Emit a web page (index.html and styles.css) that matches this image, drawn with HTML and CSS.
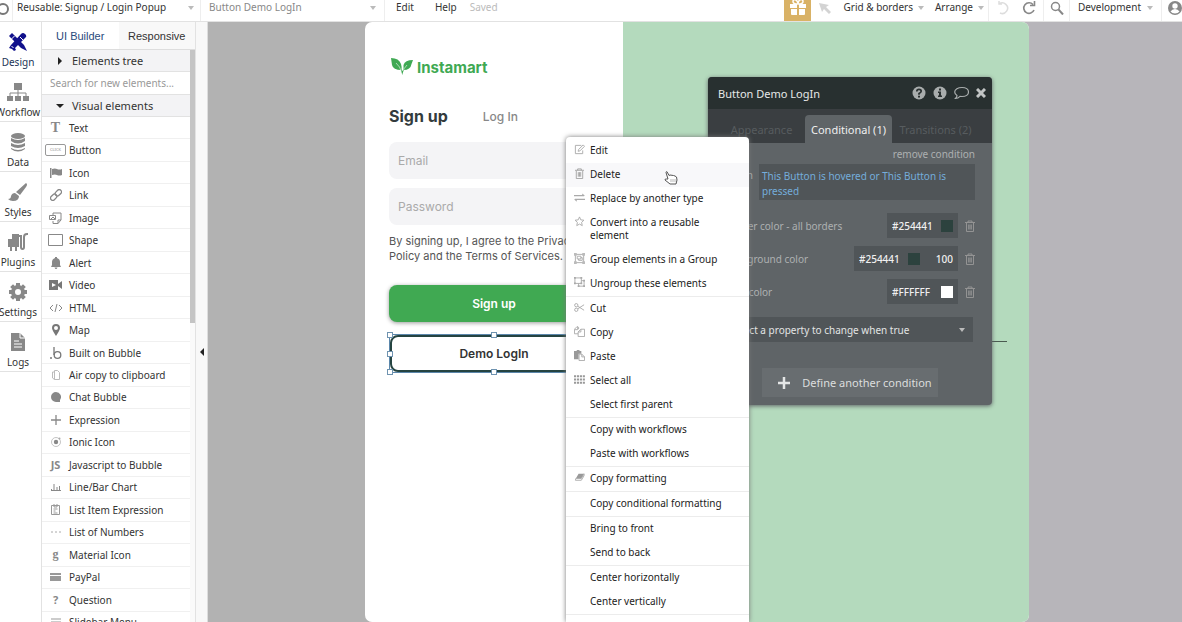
FILE: index.html
```html
<!DOCTYPE html>
<html lang="en">
<head>
    <meta charset="UTF-8">
    <meta name="viewport" content="width=device-width, initial-scale=1.0">
    <title>Signup / Login Popup - Editor</title>
    <link rel="stylesheet" href="styles.css">
</head>
<body>
    <header class="topbar">
        <div class="logo-cell">
            <svg width="12" height="14" viewBox="0 0 12 14"><circle cx="3" cy="8" r="5" fill="none" stroke="#777" stroke-width="2"/></svg>
        </div>
        <div class="picker page-picker">
            <select aria-label="Page"><option>Reusable: Signup / Login Popup</option></select>
            <span class="caret"></span>
        </div>
        <div class="picker element-picker">
            <select aria-label="Element"><option>Button Demo LogIn</option></select>
            <span class="caret"></span>
        </div>
        <nav class="main-menu">
            <button>Edit</button>
            <button>Help</button>
            <span class="saved">Saved</span>
        </nav>
        <button class="gift" aria-label="Gift">
            <svg width="18" height="16" viewBox="0 0 18 16" fill="#fff"><path d="M1 4h7v4H1zM10 4h7v4h-7zM2 9h6v6H3q-1 0-1-1zM10 9h6v5q0 1-1 1h-5z"/><path d="M8.500 4Q4 4 4 1.500 4-.5 6-.5 8 0 9 3 10-.5 12-.5t2 2Q14 4 9.500 4" fill="none" stroke="#fff" stroke-width="1.500"/></svg>
        </button>
        <button class="pointer" aria-label="Pointer">
            <svg width="12" height="12" viewBox="0 0 12 12"><path d="M0 1l10 2-3 2 5 5-2 2-5-5-2 3z" fill="#d3d3d3"/></svg>
        </button>
        <div class="drops">
            <button class="drop">Grid &amp; borders <span class="caret"></span></button>
            <button class="drop">Arrange <span class="caret"></span></button>
        </div>
        <div class="history">
            <button aria-label="Undo"><svg width="14" height="14" viewBox="0 0 14 14"><path d="M3 3A5.300 5.300 0 1 1 4 12M3 0v3h3" fill="none" stroke="#ddd" stroke-width="1.500"/></svg></button>
            <button aria-label="Redo"><svg width="14" height="14" viewBox="0 0 14 14"><path d="M11 3.500A5.300 5.300 0 1 0 12 9M12.500 0v4.500H8" fill="none" stroke="#888" stroke-width="1.600"/></svg></button>
        </div>
        <button class="search-btn" aria-label="Search">
            <svg width="14" height="14" viewBox="0 0 14 14" fill="none" stroke="#888"><circle cx="5.500" cy="5.500" r="4" stroke-width="1.500"/><path d="M8.500 8.500l4.500 5" stroke-width="2"/></svg>
        </button>
        <div class="picker version-picker">
            <select aria-label="Version"><option>Development</option></select>
            <span class="caret"></span>
        </div>
        <button class="account" aria-label="Account">
            <svg width="14" height="14" viewBox="0 0 14 14"><circle cx="7" cy="7" r="7" fill="#888"/><circle cx="7" cy="5" r="2.700" fill="#fff"/><path d="M2.500 10.500Q4 8 7 8t4.500 2.500Q10 12.500 7 12.500T2.500 10.500" fill="#fff"/></svg>
        </button>
    </header>

    <main class="workspace">
        <nav class="rail">
            <a href="#design" class="rail-item active">
                <svg width="20" height="20" viewBox="0 0 20 20" fill="#11118c"><path d="M1 4l3-3 12 12 3 6-6-3z"/><path d="M13 2q2-2 4 0l1 1q1 2-1 3L7 16l1 2-2 1-2-2-3-1 2-3z"/><path d="M3.500 7l3-3M5.500 16l-2-2M12 5l3 3" stroke="#fff"/></svg>
                Design
            </a>
            <a href="#workflow" class="rail-item">
                <svg width="24" height="20" viewBox="0 0 24 20" fill="#888"><path d="M8 1h8v7H8zM1 14h6v5H1zM9 14h6v5H9zM17 14h6v5h-6z"/><path d="M12 8v6M4 14v-3h16v3" fill="none" stroke="#888"/></svg>
                Workflow
            </a>
            <a href="#data" class="rail-item">
                <svg width="18" height="20" viewBox="0 0 18 20" fill="#888"><ellipse cx="9" cy="4" rx="7" ry="3"/><path d="M2 6q7 4 14 0v3q-7 5-14 0zM2 11q7 4 14 0v3q-7 4-14 0zM2 16q7 4 14 0v1q-7 5-14 0z"/></svg>
                Data
            </a>
            <a href="#styles" class="rail-item">
                <svg width="20" height="20" viewBox="0 0 20 20" fill="#888"><path d="M18 1q2 1 0 4l-6 8-4-3zM7 11l4 3q0 5-6 5-3 0-5-2 3 0 3-3 1-3 4-3"/></svg>
                Styles
            </a>
            <a href="#plugins" class="rail-item">
                <svg width="22" height="20" viewBox="0 0 22 20"><path d="M5 2h7v13h-2v4H8v-4H5v4H3v-4H1V7h4z" fill="#888"/><path d="M12 4h2v11q0 2 1.500 2t1.500-2V5q0-3 3-3h1" fill="none" stroke="#888" stroke-width="2"/></svg>
                Plugins
            </a>
            <a href="#settings" class="rail-item">
                <svg width="20" height="20" viewBox="0 0 20 20"><circle cx="10" cy="10" r="5" fill="none" stroke="#888" stroke-width="4"/><path d="M10 1v3M10 16v3M1 10h3M16 10h3M3.600 3.600l2 2M14.400 14.400l2 2M16.400 3.600l-2 2M5.600 14.400l-2 2" stroke="#888" stroke-width="4"/></svg>
                Settings
            </a>
            <a href="#logs" class="rail-item">
                <svg width="16" height="20" viewBox="0 0 16 20"><path d="M1 1h9l5 5v13H1z" fill="#888"/><path d="M10 1v5h5M4 9h5M4 12h8M4 15h8" fill="none" stroke="#fff"/></svg>
                Logs
            </a>
        </nav>

        <aside class="palette">
            <div class="palette-tabs">
                <button class="selected">UI Builder</button>
                <button>Responsive</button>
            </div>
            <div class="palette-body">
                <div class="palette-scroll">
                    <button class="section"><span class="tri-right"></span>Elements tree</button>
                    <input class="palette-search" type="text" aria-label="Search for new elements" placeholder="Search for new elements...">
                    <button class="section"><span class="tri-down"></span>Visual elements</button>
                    <ul class="elements">
                        <li><span class="glyph serif">T</span>Text</li>
                        <li><span class="glyph"><span class="click">CLICK</span></span>Button</li>
                        <li><span class="glyph"><svg width="12" height="12" viewBox="0 0 12 12"><path d="M0 1h1.500v10H0zM2 2q3-1 5 0t5 0v6q-3 1-5 0T2 8z" fill="#888"/></svg></span>Icon</li>
                        <li><span class="glyph"><svg width="12" height="12" viewBox="0 0 12 12" fill="none" stroke="#888" stroke-width="1.300"><rect x="5" y="1.500" width="7" height="4.500" rx="2.200" transform="rotate(-45 8.500 4)"/><rect x="0" y="6" width="7" height="4.500" rx="2.200" transform="rotate(-45 3.500 8)"/></svg></span>Link</li>
                        <li><span class="glyph"><svg width="13" height="12" viewBox="0 0 13 12" fill="none" stroke="#888"><path d="M4 3V1h8v7l-3 3.500H4V9M12 8H9v3.500"/><path d="M.5 3.500h6v4h-6zM2 7l2-2 2 2"/></svg></span>Image</li>
                        <li><span class="glyph"><svg width="15" height="12" viewBox="0 0 15 12"><path d="M.5.500h14v11H.5z" fill="none" stroke="#888"/></svg></span>Shape</li>
                        <li><span class="glyph"><svg width="12" height="12" viewBox="0 0 12 12"><path d="M5 0h2v1q3 1 3 4v3l1 2H1l1-2V5q0-3 3-4zM4.500 10.500h3Q7 12 6 12t-1.500-1.500" fill="#888"/></svg></span>Alert</li>
                        <li><span class="glyph"><svg width="13" height="10" viewBox="0 0 13 10"><path d="M0 0h9v10H0zM9 4l4-3v8L9 6z" fill="#777"/><path d="M3 3l4 2-4 2z" fill="#fff"/></svg></span>Video</li>
                        <li><span class="glyph"><svg width="14" height="10" viewBox="0 0 14 10"><path d="M4 2L1 5l3 3M10 2l3 3-3 3M8 1L6 9" fill="none" stroke="#888"/></svg></span>HTML</li>
                        <li><span class="glyph"><svg width="8" height="12" viewBox="0 0 8 12"><path d="M4 0q4 0 4 4 0 2-4 8-4-6-4-8 0-4 4-4m0 2a2 2 0 1 0 0 4 2 2 0 1 0 0-4" fill="#777"/></svg></span>Map</li>
                        <li><span class="glyph"><svg width="12" height="12" viewBox="0 0 12 12"><path d="M4 0v8" stroke="#777" stroke-width="1.300"/><circle cx="7.500" cy="8" r="3.300" fill="none" stroke="#777" stroke-width="1.300"/><circle cx="1" cy="11" r="1" fill="#777"/></svg></span>Built on Bubble</li>
                        <li><span class="glyph"><svg width="8" height="10" viewBox="0 0 8 10"><path d="M2.500.5h3l2 2v7h-5zM2.500 2h-2v6l2 1.500" fill="none" stroke="#bbb"/></svg></span>Air copy to clipboard</li>
                        <li><span class="glyph"><svg width="10" height="10" viewBox="0 0 10 10"><path d="M5 0a5 5 0 0 1 4 8v2H5A5 5 0 0 1 5 0" fill="#888"/></svg></span>Chat Bubble</li>
                        <li><span class="glyph"><svg width="10" height="10" viewBox="0 0 10 10"><path d="M5 0v10M0 5h10" stroke="#888" stroke-width="1.300"/></svg></span>Expression</li>
                        <li><span class="glyph"><svg width="10" height="10" viewBox="0 0 10 10"><circle cx="5" cy="5" r="4.500" fill="none" stroke="#aaa" stroke-width=".7"/><circle cx="5" cy="5" r="2.200" fill="#888"/><circle cx="8.500" cy="1.500" r="1" fill="#aaa"/></svg></span>Ionic Icon</li>
                        <li><span class="glyph js">JS</span>Javascript to Bubble</li>
                        <li><span class="glyph"><svg width="10" height="8" viewBox="0 0 10 8"><path d="M.5 8V6M3 8V1M6 8V4M8.500 8V3M0 7.500h10" stroke="#888" fill="none"/></svg></span>Line/Bar Chart</li>
                        <li><span class="glyph"><svg width="9" height="11" viewBox="0 0 9 11"><path d="M.5 1.500h8v9h-8zM3 0v3h3V0M2.500 5h4M2.500 7h2M2.500 9h4" fill="none" stroke="#999"/></svg></span>List Item Expression</li>
                        <li><span class="glyph"><svg width="10" height="2" viewBox="0 0 10 2"><path d="M0 1h2M4 1h2M8 1h2" stroke="#aaa"/></svg></span>List of Numbers</li>
                        <li><span class="glyph serif small">g</span>Material Icon</li>
                        <li><span class="glyph"><svg width="11" height="8" viewBox="0 0 11 8"><path d="M0 0h11v8H0z" fill="#999"/><path d="M0 2.500h11" stroke="#fff"/></svg></span>PayPal</li>
                        <li><span class="glyph question">?</span>Question</li>
                        <li><span class="glyph"><svg width="10" height="8" viewBox="0 0 10 8"><path d="M0 1h10M0 4h10M0 7h10" stroke="#999"/></svg></span>Slidebar Menu</li>
                    </ul>
                </div>
                <div class="scrollbar"><div class="thumb"></div></div>
            </div>
        </aside>

        <button class="gutter" aria-label="Collapse panel"><span class="tri-left"></span></button>

        <section class="canvas">
            <div class="popup">
                <form class="signup">
                    <div class="brand">
                        <svg width="24" height="20" viewBox="0 0 24 20" fill="#3fa953"><path d="M1 1q8 0 10 6 1 3 .5 6Q3 13 2 8zM23 3q-8 0-9.500 5v5q7 0 8-6z"/><path d="M6 6q4 3 6 10 2-5 5-8" fill="none" stroke="#d9eedd" stroke-width=".7"/><path d="M11 12l1.200 6L14 12l-1.500 2z"/></svg>
                        Instamart
                    </div>
                    <div class="switch">
                        <strong>Sign up</strong>
                        <a href="#login">Log In</a>
                    </div>
                    <input type="email" aria-label="Email" placeholder="Email">
                    <input type="password" aria-label="Password" placeholder="Password">
                    <p class="terms">By signing up, I agree to the Privacy<br>Policy and the Terms of Services.</p>
                    <button type="button" class="submit">Sign up</button>
                    <div class="selection">
                        <button type="button" class="demo">Demo LogIn</button>
                        <i class="handle nw"></i><i class="handle n"></i><i class="handle w"></i>
                        <i class="handle sw"></i><i class="handle s"></i>
                    </div>
                </form>
                <div class="hero"><hr></div>
            </div>
        </section>

        <!-- Property editor -->
        <section class="editor">
            <header class="editor-head">
                <h2>Button Demo LogIn</h2>
                <button aria-label="Help"><svg width="14" height="14" viewBox="0 0 14 14"><circle cx="7" cy="7" r="6.500" fill="#a9adad"/><path d="M4.800 5.500q0-2.200 2.200-2.200t2.200 2Q9.200 6.500 7 7.500v1.200" fill="none" stroke="#2a3131" stroke-width="1.700"/><path d="M6 9.800h2v1.700H6z" fill="#2a3131"/></svg></button>
                <button aria-label="Info"><svg width="14" height="14" viewBox="0 0 14 14"><circle cx="7" cy="7" r="6.500" fill="#a9adad"/><path d="M6 2.500h2v2H6zM5 5.500h3v4h1V11H5V9.500h1V7H5z" fill="#2a3131"/></svg></button>
                <button aria-label="Comment"><svg width="15" height="14" viewBox="0 0 15 14"><path d="M8 1.500c4 0 6.500 2 6.500 4.500S12 10.500 8 10.500L6 10.400Q4 12.500 1.500 12.500 3 11 3 9.500 .7 8 .7 6C.7 3.500 4 1.500 8 1.500z" fill="none" stroke="#a9adad" stroke-width="1.200"/></svg></button>
                <button aria-label="Close"><svg width="10" height="10" viewBox="0 0 10 10"><path d="M1 1l8 8M9 1L1 9" stroke="#c2c5c5" stroke-width="3"/></svg></button>
            </header>
            <div class="editor-tabs">
                <button>Appearance</button>
                <button class="selected">Conditional (1)</button>
                <button>Transitions (2)</button>
            </div>
            <div class="editor-body">
                <a href="#remove" class="remove">remove condition</a>
                <div class="when">
                    <span>When</span>
                    <div class="expression">This Button is hovered or This Button is pressed</div>
                </div>
                <div class="property">
                    <label for="border-color">Border color - all borders</label>
                    <div class="color-field"><input id="border-color" type="text" value="#254441"><span class="swatch dark"></span></div>
                    <button class="trash" aria-label="Remove border color"><svg width="10" height="12" viewBox="0 0 10 12"><use href="#bin"/></svg></button>
                </div>
                <div class="property">
                    <label for="bg-color">Background color</label>
                    <div class="color-field"><input id="bg-color" type="text" value="#254441"><span class="swatch dark"></span><input class="opacity" type="text" aria-label="Opacity" value="100"></div>
                    <button class="trash" aria-label="Remove background color"><svg width="10" height="12" viewBox="0 0 10 12"><use href="#bin"/></svg></button>
                </div>
                <div class="property">
                    <label for="font-color">Font color</label>
                    <div class="color-field"><input id="font-color" type="text" value="#FFFFFF"><span class="swatch white"></span></div>
                    <button class="trash" aria-label="Remove font color"><svg width="10" height="12" viewBox="0 0 10 12"><use href="#bin"/></svg></button>
                </div>
                <div class="picker property-picker">
                    <select aria-label="Property"><option>Select a property to change when true</option></select>
                    <span class="caret"></span>
                </div>
                <button class="define"><svg width="12" height="12" viewBox="0 0 12 12"><path d="M6 0v12M0 6h12" stroke="#e4e6e6" stroke-width="2.500"/></svg>Define another condition</button>
            </div>
        </section>

        <!-- Context menu -->
        <div class="context-menu">
            <div class="group">
                <button><svg viewBox="0 0 12 12"><path d="M8 1.500H1.500v9h8V7M4.500 8l.5-2 5-5 1.500 1.500-5 5z" fill="none" stroke="#aaa"/></svg>Edit</button>
                <button class="hovered"><svg viewBox="0 0 12 12"><use href="#bin" x="1" y="0"/></svg>Delete</button>
                <button><svg viewBox="0 0 12 12"><path d="M0 4h11M1 8h11" stroke="#aaa" stroke-width="1.300"/><path d="M9 1.500l3 2.500H9zM3 10.500L0 8h3z" fill="#aaa"/></svg>Replace by another type</button>
                <button><svg viewBox="0 0 12 12"><path d="M6 1l1.400 3.200 3.400.4-2.500 2.400.7 3.500-3-1.700-3 1.700.7-3.500L1.200 4.600l3.400-.4z" fill="none" stroke="#aaa"/></svg>Convert into a reusable element</button>
                <button><svg viewBox="0 0 12 12"><path d="M1.500 1.500h9v9h-9zM3.500 3.500h4v3h-4zM5 6.500V8h4V5H7.500" fill="none" stroke="#aaa"/><path d="M0 0h3v3H0zM9 0h3v3H9zM0 9h3v3H0zM9 9h3v3H9z" fill="#bbb"/></svg>Group elements in a Group</button>
                <button><svg viewBox="0 0 12 12"><path d="M1 1h7v6H1zM8 4h3v6H5V7" fill="none" stroke="#aaa"/><path d="M0 0h2v2H0zM7 0h2v2H7zM0 6h2v2H0zM7 6h2v2H7zM10 3h2v2h-2zM10 9h2v2h-2zM4 9h2v2H4z" fill="#aaa"/></svg>Ungroup these elements</button>
            </div>
            <div class="group">
                <button><svg viewBox="0 0 12 12" fill="none" stroke="#aaa"><circle cx="2.500" cy="3.500" r="1.800"/><circle cx="2.500" cy="8.500" r="1.800"/><path d="M4 4.500L11 9M4 7.500L11 3"/></svg>Cut</button>
                <button><svg viewBox="0 0 12 12" fill="none" stroke="#aaa"><path d="M5 3.500V1.500L3.500.5 .5 3.500v5h4M4 1v3H1M7.500 3.500h4v8h-7V6.500zM7.500 3.500v3h-3"/></svg>Copy</button>
                <button><svg viewBox="0 0 12 12"><path d="M0 1h3V0h3v1h2v3H5v6H0z" fill="#999"/><path d="M5.500 4.500h3l3 3v4h-6zM8.500 4.500v3h3" fill="none" stroke="#aaa"/></svg>Paste</button>
                <button><svg viewBox="0 0 12 12"><path d="M0 2.500h12M0 6h12M0 9.500h12" stroke="#999" stroke-width="2.300" stroke-dasharray="2.300 .9"/></svg>Select all</button>
                <button><svg viewBox="0 0 12 12"></svg>Select first parent</button>
            </div>
            <div class="group">
                <button><svg viewBox="0 0 12 12"></svg>Copy with workflows</button>
                <button><svg viewBox="0 0 12 12"></svg>Paste with workflows</button>
            </div>
            <div class="group">
                <button><svg viewBox="0 0 12 12"><path d="M5 2h6L8 7H2z" fill="#999"/><path d="M2 7h6l3-5v2L8 9H1.500z" fill="none" stroke="#aaa"/></svg>Copy formatting</button>
            </div>
            <div class="group">
                <button><svg viewBox="0 0 12 12"></svg>Copy conditional formatting</button>
            </div>
            <div class="group">
                <button><svg viewBox="0 0 12 12"></svg>Bring to front</button>
                <button><svg viewBox="0 0 12 12"></svg>Send to back</button>
            </div>
            <div class="group">
                <button><svg viewBox="0 0 12 12"></svg>Center horizontally</button>
                <button><svg viewBox="0 0 12 12"></svg>Center vertically</button>
            </div>
            <div class="group"></div>
        </div>

        <svg class="cursor" width="14" height="14" viewBox="0 0 14 14"><path d="M4 8L2 1.500Q2 .5 3 .7L5 4.500l1-.5 2 .3 1.500.2 1.500.5 1.500 1 .5 3-1 4H6L1 9q0-1.500 1.500-1z" fill="#fff" stroke="#555"/><path d="M7 8v3M9 8v3M11 8v3" stroke="#999" stroke-width=".7"/></svg>
    </main>

    <svg class="defs" width="0" height="0">
        <symbol id="bin" viewBox="0 0 10 12" width="10" height="12"><path d="M0 2.500h10M3 2.500V1h4v1.500M1.500 3v8.500h7V3M3.700 4.500v5M5 4.500v5M6.300 4.500v5" fill="none" stroke="#999" stroke-width=".9"/></symbol>
    </svg>
</body>
</html>
```
FILE: styles.css
```css
* {
    box-sizing: border-box;
}

body {
    margin: 0;
    height: 100vh;
    display: flex;
    flex-direction: column;
    overflow: hidden;
    font-family: "Noto Sans", sans-serif;
    font-size: 10px;
    color: #333;
    background: #fff;
}

button,
select,
input {
    font: inherit;
    color: inherit;
    border: 0;
    padding: 0;
    margin: 0;
    background: none;
    outline: 0;
}

select {
    appearance: none;
    flex: 1;
    min-width: 0;
}

a {
    color: inherit;
    text-decoration: none;
}

svg {
    flex: none;
    display: block;
}

.defs {
    position: absolute;
}

.caret {
    flex: none;
    border: 3px solid transparent;
    border-top: 4px solid #bbb;
    border-bottom: 0;
}

/* Top bar */
.topbar {
    flex: none;
    display: flex;
    height: 22px;
    border-bottom: 1px solid #e2e2e2;
    line-height: 15px;
}

.topbar > * {
    height: 21px;
    padding-bottom: 6px;
    display: flex;
    align-items: center;
}

.logo-cell {
    width: 13px;
    border-right: 1px solid #eee;
}

.topbar .picker {
    border-right: 1px solid #eee;
}

.topbar .page-picker {
    width: 188px;
    padding-left: 4px;
    padding-right: 6px;
}

.topbar .element-picker {
    width: 184px;
    padding-left: 8px;
    padding-right: 8px;
    color: #888;
}

.main-menu {
    flex: 1;
    gap: 21px;
    padding-left: 11px;
}

.saved {
    color: #bbb;
    margin-left: -8px;
}

.topbar .gift {
    width: 27px;
    background: #d9b266;
    justify-content: center;
}

.topbar .pointer {
    width: 32px;
    padding-left: 8px;
}

.drops {
    gap: 11px;
    padding-right: 4px;
}

.drop {
    display: flex;
    align-items: center;
    gap: 5px;
}

.history {
    gap: 12px;
    padding-left: 7px;
    padding-right: 7px;
    border-left: 1px solid #eee;
    border-right: 1px solid #eee;
}

.search-btn {
    width: 26px;
    justify-content: center;
    border-right: 1px solid #eee;
}

.topbar .version-picker {
    width: 92px;
    padding-left: 8px;
    padding-right: 8px;
}

.account {
    width: 20px;
    padding-left: 6px;
    overflow: hidden;
}

/* Left rail */
.workspace {
    flex: 1;
    min-height: 0;
    display: flex;
    position: relative;
    overflow: hidden;
}

.rail {
    flex: none;
    width: 42px;
    border-right: 1px solid #e2e2e2;
    overflow: hidden;
}

.rail-item {
    height: 50px;
    display: flex;
    flex-direction: column;
    align-items: center;
    padding: 10px 5px 0 0;
    gap: 3px;
    line-height: 15px;
    border-bottom: 1px solid #e2e2e2;
}

.rail-item.active {
    color: #1d3557;
}

/* Element palette */
.palette {
    flex: none;
    width: 154px;
    display: flex;
    flex-direction: column;
    border-right: 1px solid #e2e2e2;
}

.palette-tabs {
    flex: none;
    display: flex;
    height: 28px;
    border-bottom: 1px solid #ddd;
    font-family: "Liberation Sans", sans-serif;
    font-size: 11px;
}

.palette-tabs button {
    flex: 1;
    background: #f8f8f8;
}

.palette-tabs .selected {
    background: #fff;
    color: #2a4a7c;
}

.palette-body {
    flex: 1;
    min-height: 0;
    display: flex;
}

.palette-scroll {
    flex: 1;
    min-width: 0;
    overflow: hidden;
}

.section {
    display: flex;
    align-items: center;
    gap: 8px;
    width: 100%;
    height: 22px;
    padding-left: 14px;
    background: #f3f3f5;
    border-bottom: 1px solid #e2e2e2;
    font-size: 11px;
}

.tri-right {
    margin: 0 2px;
    border: 4px solid transparent;
    border-left: 4px solid #222;
    border-right: 0;
}

.tri-down {
    border: 4px solid transparent;
    border-top: 4px solid #222;
    border-bottom: 0;
}

.palette-search {
    display: block;
    width: 100%;
    height: 23px;
    padding-left: 8px;
    border-bottom: 1px solid #e2e2e2;
}

.palette-search::placeholder {
    color: #999;
}

.elements {
    list-style: none;
    margin: 0;
    padding: 0;
    display: grid;
    height: 517px;
    grid-auto-rows: 1fr;
}

.elements li {
    display: flex;
    align-items: center;
    border-bottom: 1px solid #f0f0f0;
    white-space: nowrap;
}

.glyph {
    flex: none;
    width: 27px;
    display: flex;
    justify-content: center;
    color: #888;
}

.click {
    border: 1px solid #999;
    border-radius: 2px;
    padding: 2px 4px;
    font-size: 4px;
    line-height: 6px;
}

.serif {
    font: bold 14px "Liberation Serif", serif;
}

.small {
    font-size: 12px;
}

.js,
.question {
    font-size: 11px;
    font-weight: bold;
}

.scrollbar {
    width: 5px;
    background: #fafafa;
}

.thumb {
    height: 273px;
    background: #c4c4c4;
}

.gutter {
    flex: none;
    width: 12px;
    display: flex;
    align-items: center;
    justify-content: center;
    padding-top: 59px;
    background: #f8f8f8;
    border-right: 1px solid #ddd;
}

.tri-left {
    border: 4px solid transparent;
    border-right: 4px solid #222;
    border-left: 0;
}

/* Canvas */
.canvas {
    flex: 1;
    display: flex;
    justify-content: center;
    padding-left: 4px;
    background: linear-gradient(90deg, #b2b2b2 50%, #b7b5ba 50%);
}

.popup {
    width: 664px;
    display: flex;
    border-radius: 7px;
    overflow: hidden;
    background: #fff;
}

.signup {
    width: 258px;
    padding: 31px 24px 0;
    display: flex;
    flex-direction: column;
    font-family: Inter, sans-serif;
    font-size: 11px;
}

.hero {
    flex: 1;
    padding: 319px 22px 0;
    background: #b4dabd;
}

.hero hr {
    margin: 0;
    border: 0;
    border-top: 1px solid #4a5a50;
}

.brand {
    display: flex;
    align-items: center;
    gap: 3px;
    height: 28px;
    padding-left: 1px;
    font-size: 15px;
    font-weight: 700;
    color: #3fa953;
}

.switch {
    display: flex;
    align-items: center;
    gap: 35px;
    height: 34px;
    margin: 18px 0 9px;
    color: #888;
    font-size: 12px;
    font-weight: 500;
}

.switch strong {
    font-size: 16px;
    color: #333b3d;
}

.signup input {
    height: 37px;
    padding: 0 9px;
    margin-bottom: 9px;
    border-radius: 8px;
    background: #f4f4f6;
    font-size: 12px;
}

.signup input::placeholder {
    color: #aaa;
}

.terms {
    margin: 0 0 21px;
    white-space: nowrap;
    line-height: 15px;
    color: #555;
}

.submit {
    height: 37px;
    border-radius: 8px;
    background: #40a952;
    box-shadow: 0 1px 4px #999;
    color: #fff;
    font-size: 12px;
    font-weight: 600;
}

.selection {
    position: relative;
    margin-top: 12px;
    border: 1px solid #5b87ab;
}

.demo {
    display: block;
    width: 100%;
    height: 37px;
    border: 2px solid #254441;
    border-radius: 8px;
    font-size: 12px;
    font-weight: 600;
}

.handle {
    position: absolute;
    width: 6px;
    height: 6px;
    background: #fff;
    border: 1px solid #6f93b0;
    transform: translate(-50%, -50%);
}

.nw { left: 0; top: 0; }
.n { left: 50%; top: 0; }
.w { left: 0; top: 50%; }
.sw { left: 0; top: 100%; }
.s { left: 50%; top: 100%; }

/* Property editor */
.editor {
    position: absolute;
    left: 708px;
    top: 55px;
    width: 284px;
    border-radius: 4px;
    overflow: hidden;
    background: #5f6467;
    box-shadow: 0 1px 4px #5f6467;
    color: #adb0b1;
}

.editor-head {
    display: flex;
    align-items: center;
    gap: 7px;
    height: 32px;
    padding: 0 6px 0 10px;
    background: #283030;
}

.editor-head h2 {
    flex: 1;
    margin: 0;
    font-size: 11px;
    font-weight: 400;
    color: #e6e8e8;
}

.editor-tabs {
    display: flex;
    height: 34px;
    padding: 6px 13px 0 10px;
    background: #3a3e41;
    font-size: 11px;
}

.editor-tabs button {
    flex: 1 1 0;
    color: #575c5f;
    white-space: nowrap;
}

.editor-tabs .selected {
    background: #5f6467;
    border-radius: 4px 4px 0 0;
    color: #f0f0f0;
}

.editor-body {
    display: flex;
    flex-direction: column;
    padding: 4px 17px 8px 12px;
}

.remove {
    align-self: flex-end;
    line-height: 15px;
}

.when {
    display: flex;
    justify-content: flex-end;
    gap: 6px;
    margin: 2px 0 9px;
    line-height: 23px;
}

.expression {
    width: 216px;
    height: 36px;
    padding: 5px 3px 0;
    background: #505558;
    color: #74addb;
    line-height: 15px;
}

.property {
    display: flex;
    align-items: center;
    height: 33px;
}

.property label {
    flex: 1;
    padding-left: 5px;
}

.color-field {
    display: flex;
    align-items: center;
    height: 25px;
    padding: 0 5px;
    background: #505558;
    color: #f0f0f0;
    font-weight: 500;
}

.color-field input {
    width: 49px;
}

.color-field .opacity {
    width: 33px;
    text-align: right;
}

.swatch {
    width: 12px;
    height: 12px;
}

.swatch.dark {
    background: #2c423e;
}

.swatch.white {
    background: #fff;
}

.trash {
    margin-left: 7px;
}

.property-picker {
    display: flex;
    align-items: center;
    height: 25px;
    margin: 9px 2px 0 0;
    padding: 0 8px 0 10px;
    background: #505558;
    color: #e2e4e4;
}

.define {
    display: flex;
    align-items: center;
    justify-content: center;
    gap: 12px;
    width: 176px;
    height: 29px;
    margin: 26px 0 0 42px;
    padding-left: 10px;
    background: #686d70;
    color: #dcdede;
    font-size: 11px;
}

/* Context menu */
.context-menu {
    position: absolute;
    left: 566px;
    top: 115px;
    bottom: 0;
    width: 183px;
    padding-top: 2px;
    border-radius: 4px 4px 0 0;
    background: #fff;
    box-shadow: 0 0 5px #777;
    color: #222;
}

.group + .group {
    border-top: 1px solid #ececec;
}

.context-menu button {
    display: flex;
    width: 100%;
    padding: 5px 20px 6px 8px;
    gap: 5px;
    line-height: 13px;
    text-align: left;
}

.context-menu svg {
    width: 11px;
    height: 11px;
}

.context-menu .hovered {
    background: #f8f8fa;
}

.cursor {
    position: absolute;
    left: 664px;
    top: 149px;
}
```
